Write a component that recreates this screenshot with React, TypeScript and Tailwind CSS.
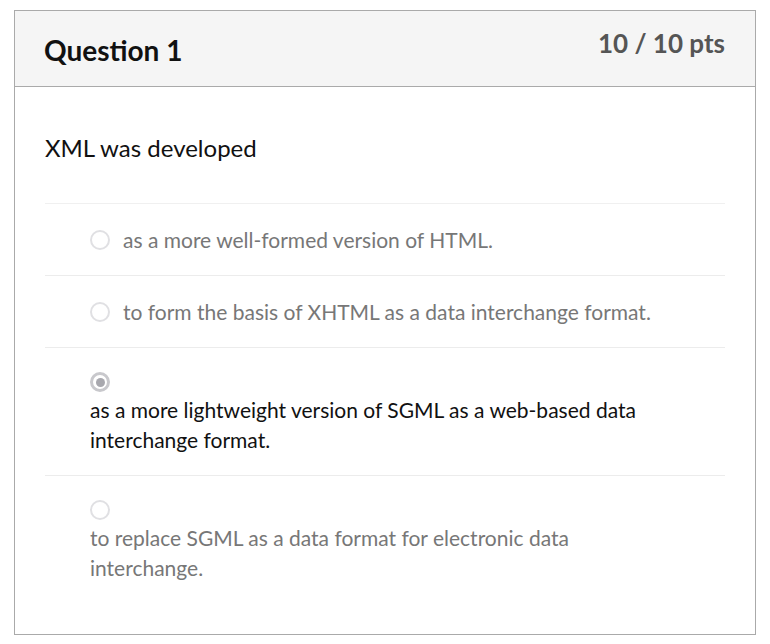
const answers = [
  { text: "as a more well-formed version of HTML.", selected: false, inline: true },
  { text: "to form the basis of XHTML as a data interchange format.", selected: false, inline: true },
  {
    text: "as a more lightweight version of SGML as a web-based data interchange format.",
    selected: true,
    inline: false,
  },
  {
    text: "to replace SGML as a data format for electronic data interchange.",
    selected: false,
    inline: false,
  },
];

function Radio({ selected }: { selected: boolean }) {
  if (selected) {
    return (
      <span className="inline-flex h-[20px] w-[20px] shrink-0 items-center justify-center rounded-full border-[3px] border-[#c8c8cc] bg-white">
        <span className="h-[9px] w-[9px] rounded-full bg-[#a8a8ae]" />
      </span>
    );
  }
  return <span className="inline-block h-[20px] w-[20px] shrink-0 rounded-full border-2 border-[#e0e0e3] bg-white" />;
}

export default function App() {
  return (
    <div className="min-h-screen bg-white pt-[10px] pl-[14px] font-['Lato','Liberation_Sans',sans-serif]">
      <div className="w-[742px] border border-[#aaaaaa]">
        {/* header */}
        <div className="flex h-[76px] items-start justify-between border-b border-[#aaaaaa] bg-[#f5f5f5] pl-[29px] pr-[30px]">
          <h2 className="mt-[21px] text-[28px] font-bold leading-[36px] text-[#111]">Question 1</h2>
          <span className="mt-[17px] text-[26px] font-bold leading-[30px] text-[#555]">10 / 10 pts</span>
        </div>

        {/* body */}
        <div className="px-[30px] pt-[46px] pb-[31px]">
          <p className="text-[24px] leading-[30px] text-[#111]">XML was developed</p>
          <div className="mt-[40px]">
            {answers.map((a, i) => (
              <div key={i} className="border-t border-[#ececec] pt-[21px] pb-[20px] pl-[45px] pr-[60px] first:border-t-[#f0f0f0]">
                {a.inline ? (
                  <div className="flex h-[30px] items-center gap-[13px]">
                    <Radio selected={a.selected} />
                    <span className="text-[21px] leading-[30px] text-[#777]">{a.text}</span>
                  </div>
                ) : (
                  <div>
                    <div className="flex h-[26px] items-center">
                      <Radio selected={a.selected} />
                    </div>
                    <p className={`text-[21px] leading-[30px] ${a.selected ? "text-[#111]" : "text-[#777]"}`}>{a.text}</p>
                  </div>
                )}
              </div>
            ))}
          </div>
        </div>
      </div>
    </div>
  );
}
